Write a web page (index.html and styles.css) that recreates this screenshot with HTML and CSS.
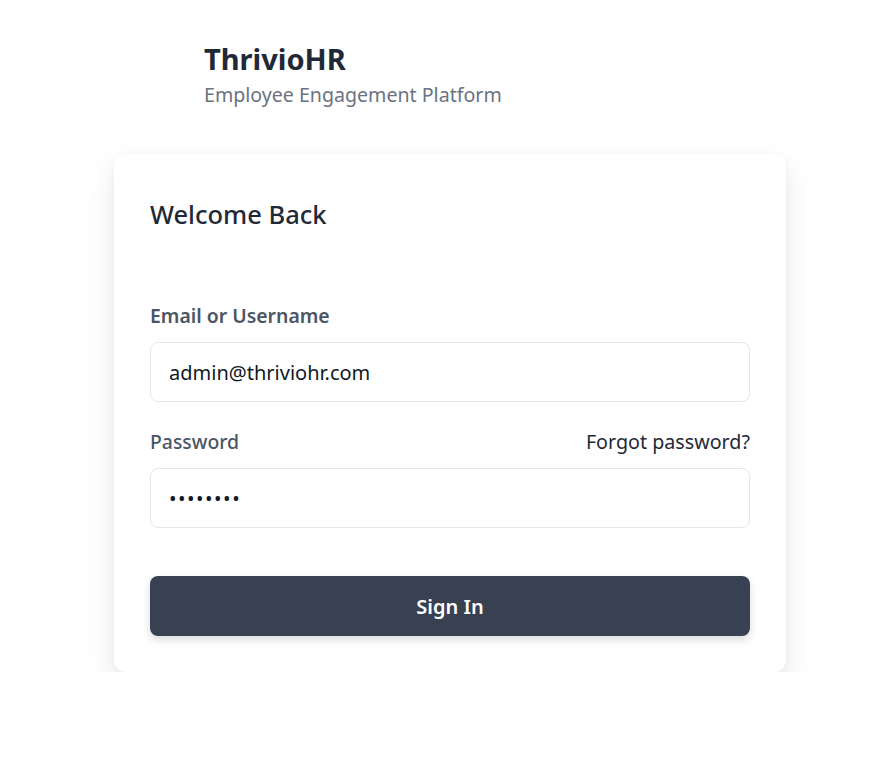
FILE: index.html
```html
<!DOCTYPE html>
<html lang="en">
<head>
<meta charset="utf-8">
<title>ThrivioHR - Sign In</title>
<link rel="stylesheet" href="styles.css">
</head>
<body>
<div class="page">
  <header class="brand">
    <h1 class="brand-name">ThrivioHR</h1>
    <p class="brand-tagline">Employee Engagement Platform</p>
  </header>
  <main class="card">
    <h2 class="card-title">Welcome Back</h2>
    <form class="form">
      <div class="field">
        <label class="label" for="email">Email or Username</label>
        <input class="input" id="email" type="text" value="admin@thriviohr.com">
      </div>
      <div class="field">
        <div class="label-row">
          <label class="label" for="password">Password</label>
          <a class="forgot" href="#">Forgot password?</a>
        </div>
        <input class="input input-password" id="password" type="password" value="password">
      </div>
      <button class="btn" type="button">Sign In</button>
    </form>
  </main>
</div>
</body>
</html>
```
FILE: styles.css
```css
* { box-sizing: border-box; }
html, body { margin: 0; padding: 0; background: #ffffff; }
body {
  font-family: "Noto Sans", "Open Sans", sans-serif;
  color: #1f2937;
}
.page {
  width: 672px;
  margin-left: 114px;
  padding-top: 39px;
}
.brand {
  padding-left: 90px;
  margin-bottom: 43px;
}
.brand-name {
  margin: 0;
  font-size: 29px;
  font-weight: 700;
  line-height: 40px;
  color: #1f2937;
}
.brand-tagline {
  margin: 0;
  font-size: 19.6px;
  line-height: 32px;
  color: #6b7280;
}
.card {
  background: #fff;
  border-radius: 12px;
  box-shadow: 0 12px 30px rgba(0,0,0,0.09), 0 3px 8px rgba(0,0,0,0.04);
  padding: 40px 36px 36px;
}
.card-title {
  margin: 0 0 68px;
  font-size: 25.5px;
  font-weight: 500;
  line-height: 40px;
  color: #1f2937;
}
.form { display: flex; flex-direction: column; }
.field { display: flex; flex-direction: column; gap: 12px; margin-bottom: 26px; }
.label-row { display: flex; justify-content: space-between; align-items: center; }
.label {
  font-size: 19.4px;
  font-weight: 600;
  line-height: 28px;
  color: #4b5563;
}
.label-row .label { font-weight: 500; }
.forgot {
  font-size: 19.7px;
  line-height: 28px;
  color: #1f2937;
  text-decoration: none;
}
.input {
  height: 60px;
  width: 100%;
  border: 1px solid #e5e7eb;
  border-radius: 8px;
  padding: 0 18px;
  font-family: inherit;
  font-size: 20px;
  color: #111827;
  background: #fff;
  outline: none;
}
.input-password { letter-spacing: 1.5px; }
.btn {
  margin-top: 22px;
  height: 60px;
  width: 100%;
  border: none;
  border-radius: 8px;
  background: #374151;
  color: #fff;
  font-family: inherit;
  font-size: 20px;
  font-weight: 600;
  box-shadow: 0 4px 8px rgba(0,0,0,0.15);
  cursor: pointer;
}
```
